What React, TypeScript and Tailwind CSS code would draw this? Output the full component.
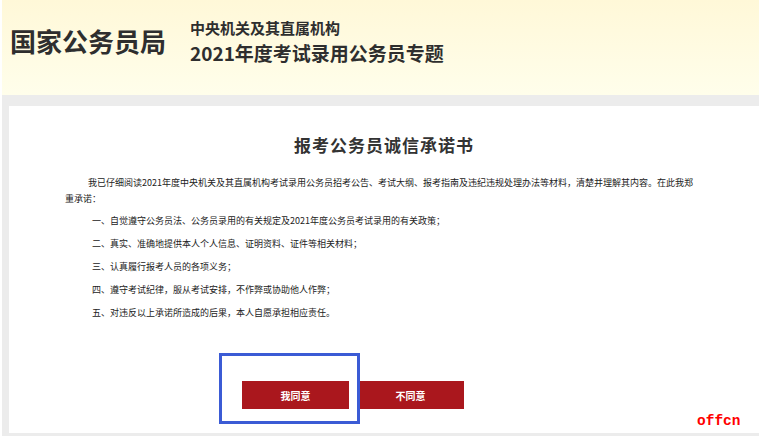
import React from 'react';

const items = [
  '一、自觉遵守公务员法、公务员录用的有关规定及2021年度公务员考试录用的有关政策；',
  '二、真实、准确地提供本人个人信息、证明资料、证件等相关材料；',
  '三、认真履行报考人员的各项义务；',
  '四、遵守考试纪律，服从考试安排，不作弊或协助他人作弊；',
  '五、对违反以上承诺所造成的后果，本人自愿承担相应责任。',
];

const App: React.FC = () => {
  return (
    <div className="w-[762px] h-[438px] bg-white pl-[2px] pr-[3px] overflow-hidden font-['Noto_Sans_CJK_SC',sans-serif] text-[#333]">
      {/* header */}
      <header className="h-[95px] flex items-start bg-gradient-to-b from-[#fff8d8] to-[#fffeeb]">
        <h1 className="pt-[28px] pl-[8px] text-[26px] leading-[26px] font-bold text-[#2e2e2e]">国家公务员局</h1>
        <div className="ml-[24px] pt-[20px] flex flex-col gap-[8px] text-[#2e2e2e]">
          <p className="text-[15px] leading-[15px] font-bold">中央机关及其直属机构</p>
          <p className="text-[19px] leading-[19px] font-bold">2021年度考试录用公务员专题</p>
        </div>
      </header>

      {/* body */}
      <section className="bg-[#ececec] pt-[11px] pl-[7px] pb-[3px]">
        <div className="relative h-[327px] bg-white pt-[27px]">
          <h2 className="text-center text-[17px] leading-[24px] font-semibold tracking-[1px] text-[#333]">
            报考公务员诚信承诺书
          </h2>

          <div className="mt-[18px] pl-[56px] text-[9px] text-[#222]">
            <p className="leading-[16px] indent-[23px]">
              我已仔细阅读2021年度中央机关及其直属机构考试录用公务员招考公告、考试大纲、报考指南及违纪违规处理办法等材料，清楚并理解其内容。在此我郑
              <br />
              重承诺：
            </p>
            <ul className="mt-[2px] pl-[27px]">
              {items.map((t) => (
                <li key={t} className="h-[23px] leading-[23px]">
                  {t}
                </li>
              ))}
            </ul>
          </div>

          <div className="mt-[57px] pl-[233px] flex gap-[8px]">
            <button className="w-[107px] h-[28px] bg-[#aa171d] text-white text-[10px] font-bold">我同意</button>
            <button className="w-[107px] h-[28px] bg-[#aa171d] text-white text-[10px] font-bold">不同意</button>
          </div>

          {/* annotation box */}
          <div className="absolute left-[210px] top-[247px] w-[141px] h-[71px] border-[3px] border-[#3b5bd5]" />

          {/* watermark */}
          <span className="absolute left-[688px] top-[307px] text-[14.5px] leading-[16px] font-bold text-[#ff0000] font-['Liberation_Mono',monospace]">
            offcn
          </span>
        </div>
      </section>
    </div>
  );
};

export default App;
